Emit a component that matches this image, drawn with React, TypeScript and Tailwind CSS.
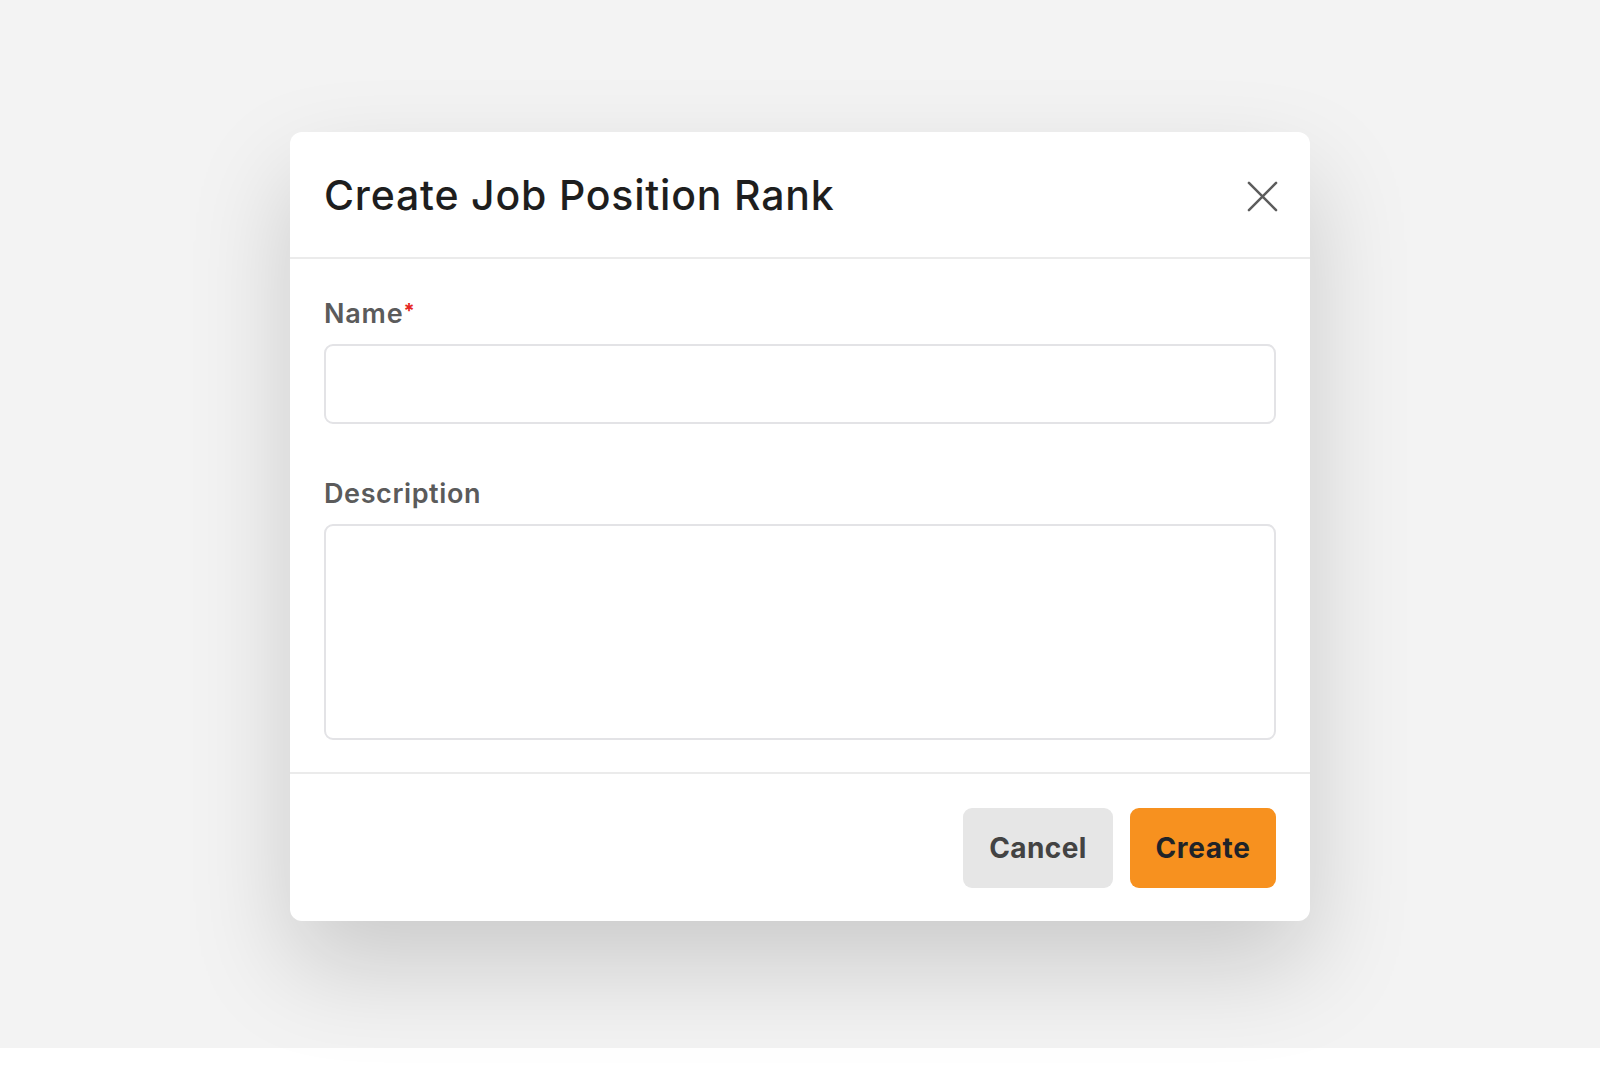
import React, { useState } from 'react';

export default function App() {
    const [name, setName] = useState('');
    const [description, setDescription] = useState('');

    return (
        <div className="min-h-screen bg-white font-['Inter',sans-serif]">
            <div className="h-[1048px] bg-[#f3f3f3] flex items-center justify-center">
                <div className="w-[1020px] mt-[4px] bg-white rounded-[12px] shadow-[0_45px_100px_rgba(0,0,0,0.17)] flex flex-col">
                    {/* header */}
                    <div className="h-[127px] pt-[4px] px-[34px] flex items-center justify-between border-b-2 border-[#ebebeb]">
                        <h2 className="text-[41px] font-medium text-[#1e1e1e] tracking-[0.8px]">Create Job Position Rank</h2>
                        <button className="w-[40px] h-[40px] flex items-center justify-center -mr-[6px] text-[#5c5c5c]">
                            <svg width="31" height="31" viewBox="0 0 32 32" fill="none" stroke="currentColor" strokeWidth="2.6" strokeLinecap="round">
                                <path d="M2 2L30 30M30 2L2 30" />
                            </svg>
                        </button>
                    </div>

                    {/* body */}
                    <div className="px-[34px] pt-[39px] pb-[32px] flex flex-col">
                        <label className="text-[27px] leading-[32px] font-semibold text-[#5b5b5b] tracking-[0.8px]">
                            Name<span className="text-[#e5271f] text-[20px] font-bold align-top relative top-[-3px]">*</span>
                        </label>
                        <input
                            className="mt-[14px] h-[80px] w-full rounded-[9px] border-2 border-[#e3e3e6] px-4 text-[24px] outline-none"
                            value={name}
                            onChange={e => setName(e.target.value)}
                        />
                        <label className="mt-[54px] text-[27px] leading-[32px] font-semibold text-[#5b5b5b] tracking-[0.6px]">Description</label>
                        <textarea
                            className="mt-[14px] h-[216px] w-full rounded-[9px] border-2 border-[#e3e3e6] px-4 py-3 text-[24px] outline-none resize-none"
                            value={description}
                            onChange={e => setDescription(e.target.value)}
                        />
                    </div>

                    {/* footer */}
                    <div className="border-t-2 border-[#ebebeb] px-[34px] pt-[34px] pb-[33px] flex justify-end gap-[17px]">
                        <button className="w-[150px] h-[80px] rounded-[9px] bg-[#e6e6e6] text-[28px] font-bold text-[#434343] tracking-[0.4px]">Cancel</button>
                        <button className="w-[146px] h-[80px] rounded-[9px] bg-[#f7911f] text-[28px] font-bold text-[#1f2328] tracking-[0.6px]">Create</button>
                    </div>
                </div>
            </div>
        </div>
    );
}
